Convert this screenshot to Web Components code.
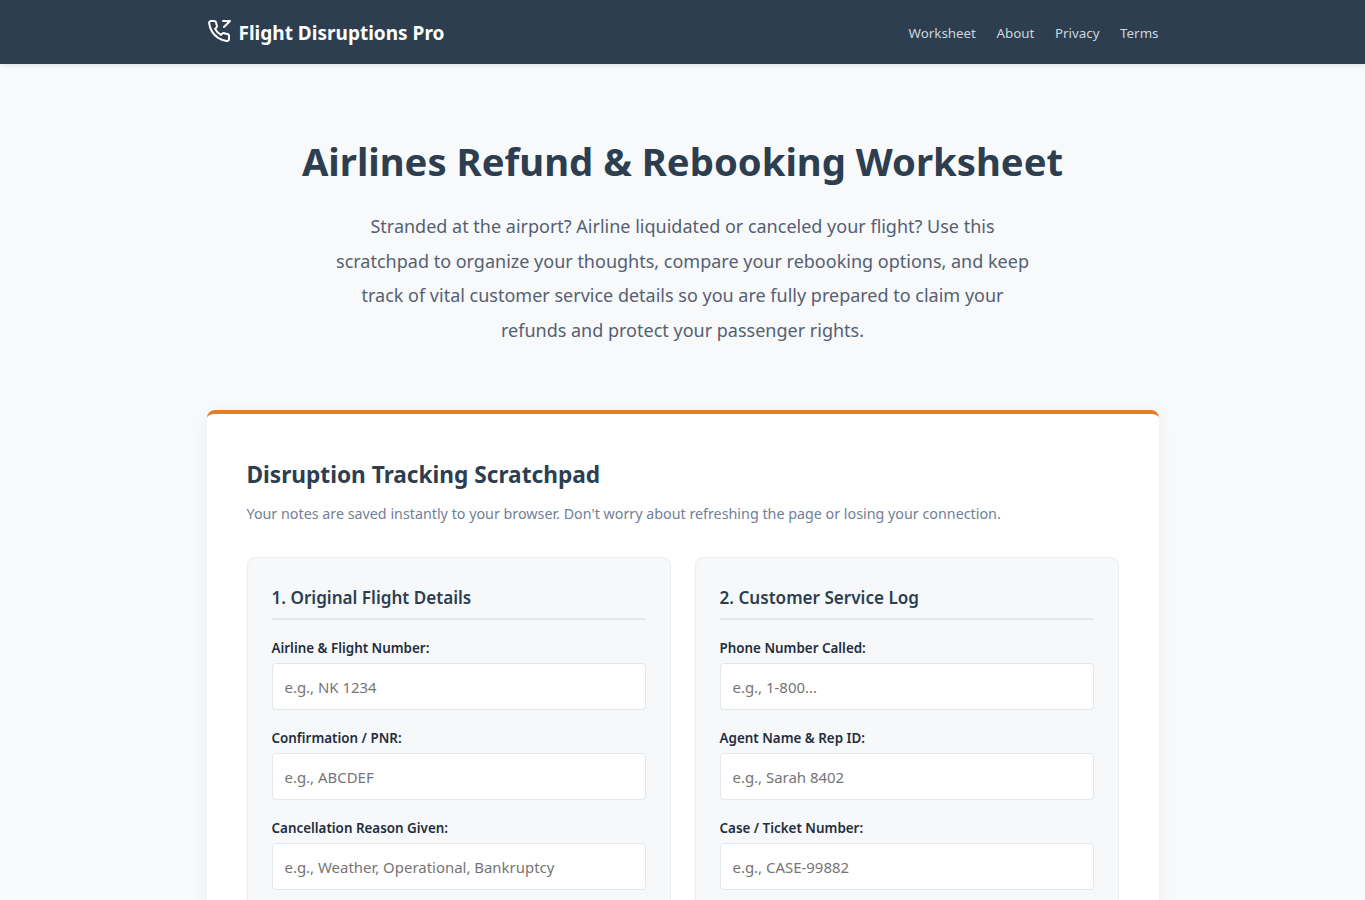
<!DOCTYPE html>
<html><head><meta charset="utf-8"><style>
html,body{margin:0;padding:0;background:#f7f9fb;font-family:"Noto Sans",sans-serif;color:#2c3e50}
</style></head><body>
<fd-header></fd-header>
<fd-hero></fd-hero>
<fd-card>
 <fd-panel slot="left" heading="1. Original Flight Details">
  <fd-field label="Airline &amp; Flight Number:" ph="e.g., NK 1234"></fd-field>
  <fd-field label="Confirmation / PNR:" ph="e.g., ABCDEF"></fd-field>
  <fd-field label="Cancellation Reason Given:" ph="e.g., Weather, Operational, Bankruptcy"></fd-field>
 </fd-panel>
 <fd-panel slot="right" heading="2. Customer Service Log">
  <fd-field label="Phone Number Called:" ph="e.g., 1-800..."></fd-field>
  <fd-field label="Agent Name &amp; Rep ID:" ph="e.g., Sarah 8402"></fd-field>
  <fd-field label="Case / Ticket Number:" ph="e.g., CASE-99882"></fd-field>
 </fd-panel>
</fd-card>
<script>
function def(name,html,init){customElements.define(name,class extends HTMLElement{constructor(){super();const r=this.attachShadow({mode:'open'});r.innerHTML=html;if(init)init(this,r);}connectedCallback(){if(this.sync)this.sync();}});}
def('fd-header',`<style>
:host{display:block;background:#2c3e50;height:64px;box-shadow:0 2px 4px rgba(0,0,0,.08)}
.in{width:952px;margin:0 auto;height:64px;display:flex;align-items:center;justify-content:space-between}
.brand{display:flex;align-items:center;gap:8px;color:#fff;font-weight:700;font-size:19.03px;margin-top:1px}
svg{width:24px;height:24px;display:block;margin-top:-3px}
nav{display:flex;gap:20.6px;font-size:13.35px;color:#cdd6dd;margin-top:1px}
</style><div class="in"><div class="brand"><svg viewBox="0 0 24 24" fill="none" stroke="#fff" stroke-width="2" stroke-linecap="round" stroke-linejoin="round"><polyline points="16 2 23 2 17 8"/><path d="M22 16.92v3a2 2 0 0 1-2.18 2 19.79 19.79 0 0 1-8.63-3.07 19.5 19.5 0 0 1-6-6 19.79 19.79 0 0 1-3.07-8.67A2 2 0 0 1 4.11 2h3a2 2 0 0 1 2 1.72 12.84 12.84 0 0 0 .7 2.81 2 2 0 0 1-.45 2.11L8.09 9.91a16 16 0 0 0 6 6l1.27-1.27a2 2 0 0 1 2.11-.45 12.84 12.84 0 0 0 2.81.7A2 2 0 0 1 22 16.92z"/></svg><span>Flight Disruptions Pro</span></div><nav><span>Worksheet</span><span>About</span><span>Privacy</span><span>Terms</span></nav></div>`);
def('fd-hero',`<style>
:host{display:block;text-align:center;padding-top:71px}
h1{margin:0;font-size:38.25px;line-height:52px;font-weight:700;color:#2c3e50}
p{width:700px;margin:22px auto 0;font-size:18px;line-height:34.6px;color:#556072}
</style><h1>Airlines Refund &amp; Rebooking Worksheet</h1><p>Stranded at the airport? Airline liquidated or canceled your flight? Use this scratchpad to organize your thoughts, compare your rebooking options, and keep track of vital customer service details so you are fully prepared to claim your refunds and protect your passenger rights.</p>`);
def('fd-card',`<style>
:host{display:block;box-sizing:border-box;width:952px;margin:63px auto 0;background:#fff;border-top:4px solid #e47e26;border-radius:8px;padding:41px 40px 40px;box-shadow:0 4px 15px rgba(0,0,0,.05)}
h2{margin:0;font-size:22.65px;line-height:40px;font-weight:700;color:#2c3e50}
p{margin:8px 0 0;font-size:14.3px;line-height:22px;color:#718096}
.g{display:grid;grid-template-columns:1fr 1fr;gap:24px;margin-top:32px}
</style><h2>Disruption Tracking Scratchpad</h2><p>Your notes are saved instantly to your browser. Don't worry about refreshing the page or losing your connection.</p><div class="g"><slot name="left"></slot><slot name="right"></slot></div>`);
def('fd-panel',`<style>
:host{display:block;background:#f6f8fa;border:1px solid #eceff2;border-radius:8px;padding:24px}
h3{margin:0 0 18px;font-size:17.1px;line-height:31px;padding-bottom:5px;border-bottom:2px solid #e5e9ec;font-weight:600;color:#2c3e50}
</style><h3></h3><slot></slot>`,(h,r)=>{h.sync=()=>{r.querySelector('h3').textContent=h.getAttribute('heading')}});
def('fd-field',`<style>
:host{display:block;margin-bottom:18px}
label{display:block;font-size:13.4px;line-height:20px;font-weight:600;color:#1f2d3d;margin-bottom:5px}
input{display:block;box-sizing:border-box;width:100%;height:47px;padding:0 12px;border:1px solid #e2e7eb;border-radius:4px;background:#fff;font:14.95px "Noto Sans",sans-serif}
input::placeholder{color:#757575;opacity:1}
</style><label></label><input>`,(h,r)=>{h.sync=()=>{r.querySelector('label').textContent=h.getAttribute('label');r.querySelector('input').placeholder=h.getAttribute('ph')}});
</script>
</body></html>
